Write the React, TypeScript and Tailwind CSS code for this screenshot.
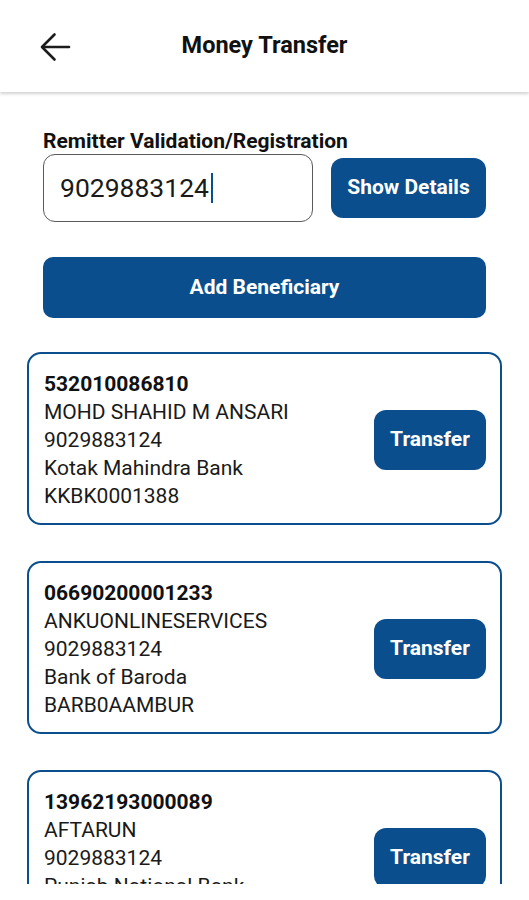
import React from "react";

const beneficiaries = [
  { acc: "532010086810", name: "MOHD SHAHID M ANSARI", mobile: "9029883124", bank: "Kotak Mahindra Bank", ifsc: "KKBK0001388" },
  { acc: "06690200001233", name: "ANKUONLINESERVICES", mobile: "9029883124", bank: "Bank of Baroda", ifsc: "BARB0AAMBUR" },
  { acc: "13962193000089", name: "AFTARUN", mobile: "9029883124", bank: "Punjab National Bank", ifsc: "PUNB0139610" },
];

export default function App() {
  return (
    <div className="h-[900px] w-full bg-white flex flex-col overflow-hidden" style={{ fontFamily: "Roboto, 'Liberation Sans', sans-serif" }}>
      {/* Header */}
      <header className="h-[92px] shrink-0 relative flex items-center justify-center bg-white shadow-[0_2px_3px_rgba(0,0,0,0.18)] z-10">
        <button className="absolute left-[38px] top-[31px] w-[34px] h-[32px] flex items-center justify-center text-[#1c1c1c]">
          <svg width="32" height="30" viewBox="0 0 32 30" fill="none" stroke="currentColor" strokeWidth="2.6" strokeLinecap="round" strokeLinejoin="round">
            <path d="M30 15H3.5" />
            <path d="M15.5 2.5L3 15l12.5 12.5" />
          </svg>
        </button>
        <h1 className="text-[23.5px] font-bold text-[#111]">Money Transfer</h1>
      </header>

      {/* Content */}
      <main className="h-[792px] shrink-0 overflow-hidden px-[43px] pt-[37px]">
        <label className="block text-[21px] leading-[24px] font-bold text-[#111]">Remitter Validation/Registration</label>
        <div className="mt-[1px] flex items-center gap-[18px]">
          <div className="w-[270px] h-[68px] rounded-[12px] border-[1.5px] border-[#5a5a5a] flex items-center pl-[16px]">
            <span className="text-[26.5px] text-[#1a1a1a] leading-none">9029883124</span>
            <span className="ml-[2px] w-[2.5px] h-[30px] bg-[#0b4e8d]" />
          </div>
          <button className="w-[155px] h-[60px] rounded-[12px] bg-[#0b4e8d] text-white text-[21px] font-bold">Show Details</button>
        </div>

        <button className="mt-[35px] w-[443px] h-[61px] rounded-[10px] bg-[#0b4e8d] text-white text-[21px] font-bold">Add Beneficiary</button>

        <div className="-mx-[16px] mt-[34px] flex flex-col gap-[36px]">
          {beneficiaries.map((b) => (
            <div key={b.acc} className="border-2 border-[#0b4e8d] rounded-[14px] pl-[15px] pr-[14px] pt-[16px] pb-[13px] flex items-center justify-between">
              <div className="text-[21px] leading-[28px] text-[#1a1a1a]">
                <div className="font-bold text-[#111]">{b.acc}</div>
                <div>{b.name}</div>
                <div>{b.mobile}</div>
                <div>{b.bank}</div>
                <div>{b.ifsc}</div>
              </div>
              <button className="w-[112px] h-[60px] rounded-[12px] bg-[#0b4e8d] text-white text-[21px] font-bold">Transfer</button>
            </div>
          ))}
        </div>
      </main>
      <div className="flex-1 bg-white" />
    </div>
  );
}
